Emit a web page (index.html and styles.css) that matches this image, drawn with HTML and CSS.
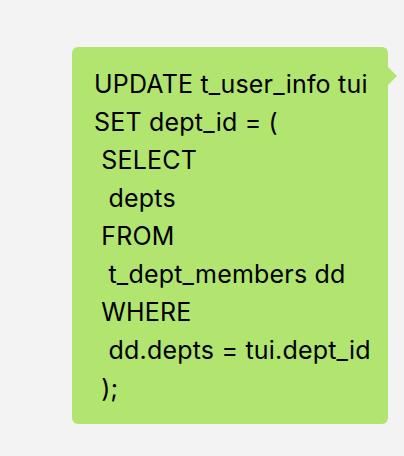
FILE: index.html
```html
<!DOCTYPE html>
<html>
<head>
<meta charset="utf-8">
<link rel="stylesheet" href="styles.css">
</head>
<body>
<div class="chat">
  <div class="bubble"><pre class="msg">UPDATE t_user_info tui
SET dept_id = (
 SELECT
  depts
 FROM
  t_dept_members dd
 WHERE
  dd.depts = tui.dept_id
 );</pre></div>
</div>
</body>
</html>
```
FILE: styles.css
```css
html, body {
  margin: 0;
  padding: 0;
  background: #f3f3f3;
}
.chat {
  width: 404px;
  height: 456px;
  box-sizing: border-box;
  padding: 47px 16px 0 72px;
  display: flex;
  align-items: flex-start;
}
.bubble {
  position: relative;
  width: 316px;
  box-sizing: border-box;
  background: #b2e470;
  border-radius: 6px;
  padding: 18px 8px 17px 22px;
}
.bubble::after {
  content: "";
  position: absolute;
  right: -9px;
  top: 20px;
  width: 0;
  height: 0;
  border-top: 9px solid transparent;
  border-bottom: 9px solid transparent;
  border-left: 9px solid #b2e470;
}
.msg {
  margin: 0;
  font-family: Inter, "Liberation Sans", Arial, sans-serif;
  font-size: 25px;
  letter-spacing: 0.2px;
  line-height: 38px;
  color: #000;
  white-space: pre;
}
```
